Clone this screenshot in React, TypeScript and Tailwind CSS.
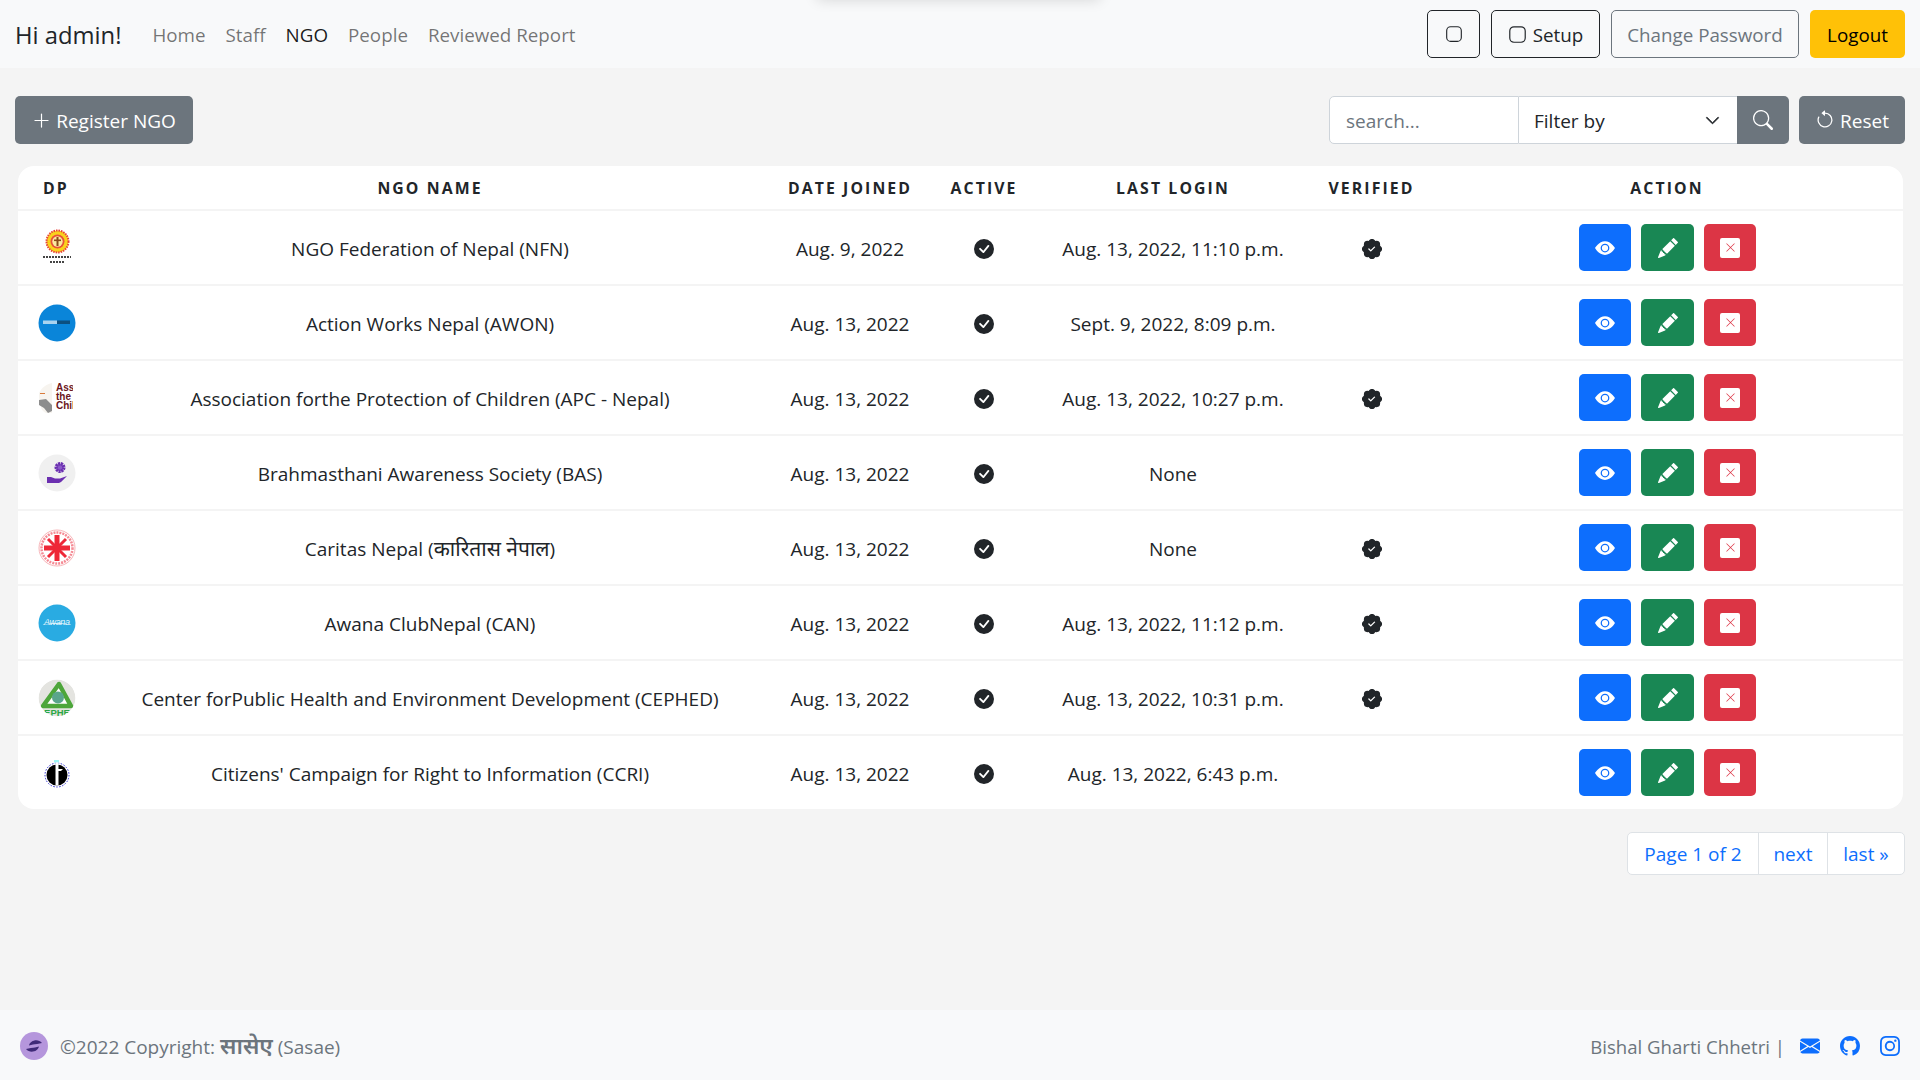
import { BsApp, BsPlusLg, BsSearch, BsArrowCounterclockwise, BsEyeFill, BsPencilFill, BsXLg, BsCheckCircleFill, BsPatchCheckFill, BsEnvelopeFill, BsGithub, BsInstagram, BsChevronDown } from "react-icons/bs";

const font = "font-['Open_Sans','Noto_Sans','Noto_Sans_Devanagari','Lohit_Devanagari','DejaVu_Sans',sans-serif]";

function Circle({ children }: { children: React.ReactNode }) {
  return <svg width="38" height="38" viewBox="0 0 38 38" className="block">{children}</svg>;
}

const logos: React.ReactNode[] = [
  <Circle key="a">
    <circle cx="19.5" cy="12.5" r="11" fill="#f9d21c" stroke="#e8403a" strokeWidth="2" strokeDasharray="1.5 1" />
    <circle cx="19.5" cy="12.5" r="7" fill="#e8503a" />
    <circle cx="19.5" cy="12.5" r="5.2" fill="#fbe9a0" />
    <rect x="18.5" y="8" width="2" height="9" fill="#8a4a1a" />
    <rect x="16" y="10.500" width="7" height="1.600" fill="#8a4a1a" />
    <line x1="5" y1="28" x2="33" y2="28" stroke="#444" strokeWidth="2" strokeDasharray="2 1" />
    <line x1="12" y1="33" x2="26" y2="33" stroke="#444" strokeWidth="2" strokeDasharray="2 1" />
  </Circle>,
  <Circle key="b">
    <circle cx="19" cy="19" r="18.500" fill="#0a85d9" />
    <rect x="5" y="16.500" width="14" height="3.500" fill="#a9d3ef" />
    <rect x="19" y="16.500" width="13" height="3.500" fill="#0b4f80" />
  </Circle>,
  <Circle key="c">
    <path d="M1 14c3-6 8-9 13-10v30H8C3 32 1 26 1 14z" fill="#f7f4ef" />
    <rect x="2" y="14" width="5" height="1" fill="#d97a3a" />
    <path d="M1 21l7-1 6 6v6l-4 2-4-5-5-3z" fill="#8d8d8d" />
    <svg x="17" y="0" width="18" height="38" viewBox="0 0 18 38">
      <text x="1" y="12" fontSize="10" fontWeight="700" fill="#6b1520" fontFamily="'Liberation Sans',sans-serif">Ass</text>
      <text x="1" y="21" fontSize="10" fontWeight="700" fill="#6b1520" fontFamily="'Liberation Sans',sans-serif">the I</text>
      <text x="1" y="30" fontSize="10" fontWeight="700" fill="#6b1520" fontFamily="'Liberation Sans',sans-serif">Chil</text>
    </svg>
  </Circle>,
  <Circle key="d">
    <circle cx="19" cy="19" r="18.500" fill="#f0f0f0" />
    <circle cx="22" cy="13.500" r="3.800" fill="#8a5ac8" stroke="#6b2fb0" strokeWidth="3.400" strokeDasharray="2 .6" />
    <path d="M9 23h4l4 1.500h5l7-2.500-6 6-2 1H9z" fill="#6b2fb0" />
  </Circle>,
  <Circle key="e">
    <circle cx="19" cy="19" r="18" fill="#fff" stroke="#f7b4b8" strokeWidth="1" />
    <circle cx="19" cy="19" r="15.500" fill="none" stroke="#f58a94" strokeWidth="2.500" strokeDasharray="2 1" />
    <path d="M16.500 6h5v10.500H32v5H21.500V32h-5V21.500H6v-5h10.500z" fill="#ee2737" />
    <path d="M10 10l18 18M28 10L10 28" stroke="#ee2737" strokeWidth="3" />
  </Circle>,
  <Circle key="f">
    <circle cx="19" cy="19" r="18.500" fill="#29abe2" />
    <path d="M3 21c9-2.500 23-2.500 32 0-9-1.200-23-1.200-32 0z" fill="#fff" />
    <text x="6" y="21" fontSize="9" fontStyle="italic" fill="#e8f7fd" fontFamily="'Liberation Sans',sans-serif" textLength="26">Awana</text>
  </Circle>,
  <Circle key="g">
    <clipPath id="cg"><circle cx="19" cy="19" r="18.500" /></clipPath>
    <g clipPath="url(#cg)">
      <circle cx="19" cy="19" r="18.500" fill="#e4e4e0" />
      <path d="M21 5L5 27h28z" fill="#fff" stroke="#4da63a" strokeWidth="4.500" strokeLinejoin="round" />
      <circle cx="20" cy="18.500" r="6" fill="#5aa58c" />
      <text x="19" y="37" fontSize="9.500" fontWeight="700" textAnchor="middle" fill="#2aa845" fontFamily="'Liberation Sans',sans-serif">EPHE</text>
    </g>
  </Circle>,
  <Circle key="h">
    <circle cx="19" cy="21" r="12" fill="#fff" stroke="#2a2ad0" strokeWidth="1" strokeDasharray="1.500 1.500" />
    <circle cx="19" cy="21" r="10.500" fill="#000" />
    <rect x="16" y="6" width="5" height="2.500" fill="#9ef5f5" />
    <path d="M17.500 8.500h3v23h-3z" fill="#fff" />
    <path d="M20 15h5l-2 2h-3z" fill="#fff" />
  </Circle>,
];

const rows: readonly (readonly [React.ReactNode, string, string, boolean])[] = [
  ["NGO Federation of Nepal (NFN)", "Aug. 9, 2022", "Aug. 13, 2022, 11:10 p.m.", true],
  ["Action Works Nepal (AWON)", "Aug. 13, 2022", "Sept. 9, 2022, 8:09 p.m.", false],
  ["Association forthe Protection of Children (APC - Nepal)", "Aug. 13, 2022", "Aug. 13, 2022, 10:27 p.m.", true],
  ["Brahmasthani Awareness Society (BAS)", "Aug. 13, 2022", "None", false],
  [<>Caritas Nepal (<span className="text-[21px]">कारितास नेपाल</span>)</>, "Aug. 13, 2022", "None", true],
  ["Awana ClubNepal (CAN)", "Aug. 13, 2022", "Aug. 13, 2022, 11:12 p.m.", true],
  ["Center forPublic Health and Environment Development (CEPHED)", "Aug. 13, 2022", "Aug. 13, 2022, 10:31 p.m.", true],
  ["Citizens' Campaign for Right to Information (CCRI)", "Aug. 13, 2022", "Aug. 13, 2022, 6:43 p.m.", false],
];

const th = "font-bold text-[15.8px] tracking-[2.1px] text-center uppercase align-middle h-[44px] p-0 pt-[2px]";
const td = "p-0 pt-[2px]";
const tdText = "p-0 pt-[3px]";

export default function App() {
  return (
    <div className={`${font} relative h-[1080px] flex flex-col bg-[#f4f4f4] text-[#212529] text-[19px] overflow-hidden`}>
      <div className="absolute left-[817px] top-[-20px] w-[283px] h-[20px] shadow-[0_0_14px_rgba(0,0,0,0.14)]" />
      <nav className="h-[68px] shrink-0 bg-[#f8f9fa] flex items-center pl-[15px] pr-[15px]">
        <span className="text-[23.8px] mr-[31px] pt-[3px]">Hi admin!</span>
        <div className="flex gap-[20px] text-black/55 text-[18.8px] pt-[2px]">
          <a>Home</a>
          <a>Staff</a>
          <a className="text-black/90">NGO</a>
          <a>People</a>
          <a>Reviewed Report</a>
        </div>
        <div className="ml-auto flex gap-[11px] text-[18.8px]">
          <button className="h-[48px] w-[53px] border border-[#212529] rounded-[5px] flex items-center justify-center"><BsApp size={18} /></button>
          <button className="h-[48px] w-[109px] border border-[#212529] rounded-[5px] flex items-center justify-center gap-[6px]"><BsApp size={19} /><span className="pt-[2px]">Setup</span></button>
          <button className="h-[48px] w-[188px] border border-[#6c757d] rounded-[5px] text-[#6c757d] pt-[2px]">Change Password</button>
          <button className="h-[48px] w-[95px] bg-[#ffc107] rounded-[5px] text-black pt-[2px]">Logout</button>
        </div>
      </nav>

      <div className="flex-1 pl-[15px] pr-[15px]">
        <div className="flex justify-between mt-[28px]">
          <button className="h-[48px] w-[178px] bg-[#6c757d] text-white rounded-[5px] flex items-center justify-center gap-[5px]"><BsPlusLg size={19} /><span className="pt-[2px]">Register NGO</span></button>
          <div className="flex">
            <div className="h-[48px] w-[190px] bg-white border border-[#ced4da] rounded-l-[5px] flex items-center pl-[16px] text-[#6c757d] pt-[2px]">search...</div>
            <div className="h-[48px] w-[218px] bg-white border-y border-[#ced4da] flex items-center justify-between pl-[15px] pr-[17px]"><span className="pt-[2px]">Filter by</span><BsChevronDown size={15} className="stroke-[0.8]" /></div>
            <button className="h-[48px] w-[52px] bg-[#6c757d] text-white rounded-r-[5px] flex items-center justify-center"><BsSearch size={20} /></button>
            <button className="h-[48px] w-[106px] ml-[10px] bg-[#6c757d] text-white rounded-[5px] flex items-center justify-center gap-[5px]"><BsArrowCounterclockwise size={20} /><span className="pt-[2px]">Reset</span></button>
          </div>
        </div>

        <div className="mt-[22px] ml-[3px] mr-[2px] bg-white rounded-[16px] overflow-hidden">
          <table className="w-full table-fixed border-collapse text-center">
            <thead>
              <tr className="border-b-2 border-[#f4f4f4]">
                <th className={`${th} w-[76px]`}>DP</th>
                <th className={`${th} w-[672px]`}>NGO Name</th>
                <th className={`${th} w-[168px]`}>Date Joined</th>
                <th className={`${th} w-[100px]`}>Active</th>
                <th className={`${th} w-[278px]`}>Last Login</th>
                <th className={`${th} w-[119px]`}>Verified</th>
                <th className={th}>Action</th>
              </tr>
            </thead>
            <tbody>
              {rows.map((r, i) => (
                <tr key={i} className="h-[75px] last:h-[74px] border-b-2 border-[#f4f4f4] last:border-b-0">
                  <td className="p-0"><div className="flex justify-center pl-[1px]">{logos[i]}</div></td>
                  <td className={tdText}>{r[0]}</td>
                  <td className={tdText}>{r[1]}</td>
                  <td className={td}><div className="flex justify-center"><BsCheckCircleFill size={20} /></div></td>
                  <td className={tdText}>{r[2]}</td>
                  <td className={td}><div className="flex justify-center">{r[3] && <BsPatchCheckFill size={20} />}</div></td>
                  <td className="p-0">
                    <div className="flex justify-center gap-[10px] pl-[1px]">
                      <button className="h-[47px] w-[52px] bg-[#0d6efd] text-white rounded-[5px] flex items-center justify-center"><BsEyeFill size={20} /></button>
                      <button className="h-[47px] w-[53px] bg-[#198754] text-white rounded-[5px] flex items-center justify-center"><BsPencilFill size={20} /></button>
                      <button className="h-[47px] w-[52px] bg-[#dc3545] rounded-[5px] flex items-center justify-center"><span className="w-[20px] h-[20px] bg-white rounded-[2px] flex items-center justify-center text-[#dc3545]"><BsXLg size={11} /></span></button>
                    </div>
                  </td>
                </tr>
              ))}
            </tbody>
          </table>
        </div>

        <div className="flex justify-end mt-[23px] text-[#0d6efd]">
          <div className="flex h-[43px] bg-white border border-[#dee2e6] rounded-[5px]">
            <a className="w-[131px] flex items-center justify-center border-r border-[#dee2e6] pt-[2px]">Page 1 of 2</a>
            <a className="w-[69px] flex items-center justify-center border-r border-[#dee2e6] pt-[2px]">next</a>
            <a className="w-[76px] flex items-center justify-center pt-[2px]">last »</a>
          </div>
        </div>
      </div>

      <footer className="h-[70px] shrink-0 bg-[#f8f9fa] flex items-center pl-[20px] pr-[20px] text-[#6c757d]">
        <svg width="28" height="28" viewBox="0 0 28 28" className="mr-[12px] mt-[2px]">
          <circle cx="14" cy="14" r="14" fill="#b596dc" />
          <path d="M9 13.500C10 8.500 18 6 22 11c-3 1-7 1-9 1.500z" fill="#3f2a78" />
          <path d="M19 14.500C18 19.500 10 22 6 17c3-1 7-1 9-1.500z" fill="#3f2a78" />
        </svg>
        <span>©2022 Copyright: <span className="font-semibold text-[23px]">सासेए</span> (Sasae)</span>
        <span className="ml-auto text-[18.6px] pt-[3px]">Bishal Gharti Chhetri |</span>
        <div className="flex items-center gap-[20px] ml-[15px] text-[#0d6efd] pt-[2px]">
          <BsEnvelopeFill size={20} />
          <BsGithub size={20} />
          <BsInstagram size={20} />
        </div>
      </footer>
    </div>
  );
}
